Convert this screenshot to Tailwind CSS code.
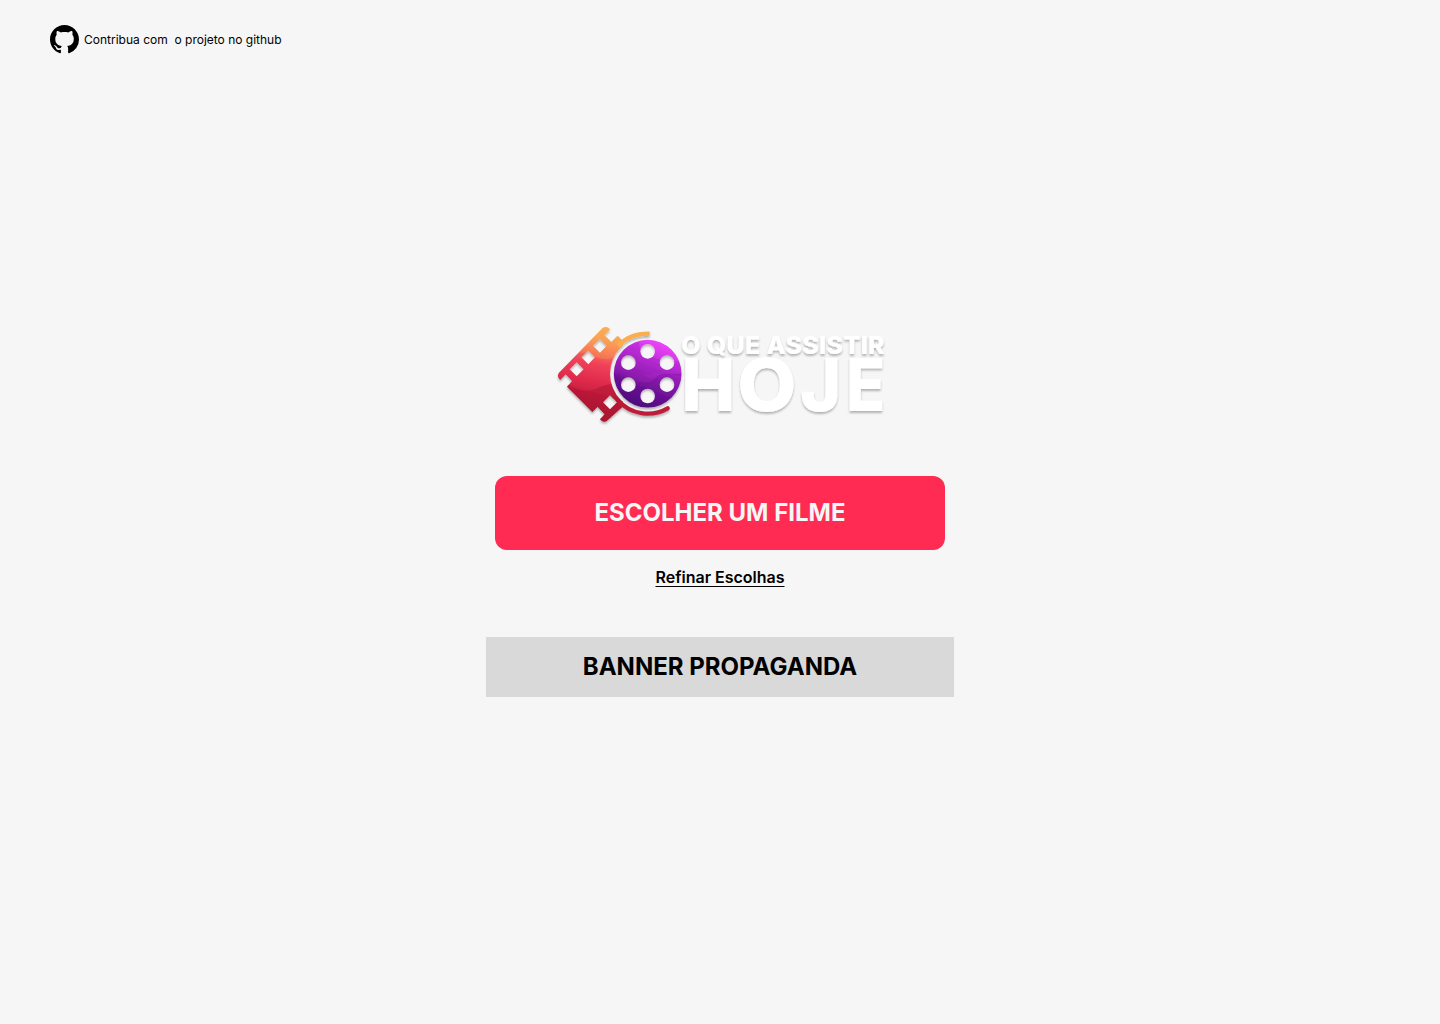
<!DOCTYPE html>
<html lang="pt-BR">
<head>
<meta charset="utf-8">
<title>O que assistir hoje</title>
<script src="https://cdn.jsdelivr.net/npm/@tailwindcss/browser@4"></script>
</head>
<body class="h-screen overflow-hidden bg-[#f6f6f6] font-['Inter',sans-serif] text-black flex flex-col">
<header class="h-[79px] pl-[50px] flex items-center shrink-0">
  <a class="flex items-center gap-[5px] text-[12px] leading-[15px]">
    <svg class="w-[29px] h-[29px]" viewBox="0 0 16 16" fill="currentColor"><path d="M8 0C3.58 0 0 3.58 0 8c0 3.54 2.29 6.53 5.47 7.59.4.07.55-.17.55-.38 0-.19-.01-.82-.01-1.49-2.01.37-2.53-.49-2.69-.94-.09-.23-.48-.94-.82-1.13-.28-.15-.68-.52-.01-.53.63-.01 1.08.58 1.23.82.72 1.21 1.87.87 2.33.66.07-.52.28-.87.51-1.07-1.78-.2-3.64-.89-3.64-3.95 0-.87.31-1.59.82-2.15-.08-.2-.36-1.02.08-2.12 0 0 .67-.21 2.2.82.64-.18 1.32-.27 2-.27s1.36.09 2 .27c1.53-1.04 2.2-.82 2.2-.82.44 1.1.16 1.92.08 2.12.51.56.82 1.27.82 2.15 0 3.07-1.87 3.75-3.65 3.95.29.25.54.73.54 1.48 0 1.07-.01 1.93-.01 2.2 0 .21.15.46.55.38A8.01 8.01 0 0 0 16 8c0-4.42-3.58-8-8-8z"/></svg>
    <span class="whitespace-pre">Contribua com  o projeto no github</span>
  </a>
</header>
<main class="flex flex-col items-center pt-[241px]">
  <svg class="w-[340px] h-[110px] overflow-visible" viewBox="0 0 1020 330" role="img" aria-label="O que assistir hoje">
    <defs>
      <linearGradient id="film" gradientUnits="userSpaceOnUse" x1="185" y1="25" x2="130" y2="290">
        <stop offset="0" stop-color="#fbb251"/><stop offset=".14" stop-color="#fba054"/><stop offset=".28" stop-color="#f67258"/><stop offset=".42" stop-color="#f04058"/><stop offset=".6" stop-color="#e22c4e"/><stop offset=".8" stop-color="#c41d3c"/><stop offset="1" stop-color="#b0142f"/>
      </linearGradient>
      <linearGradient id="arc" gradientUnits="userSpaceOnUse" x1="0" y1="210" x2="0" y2="290">
        <stop offset="0" stop-color="#b21531"/><stop offset="1" stop-color="#c0203c"/>
      </linearGradient>
      <linearGradient id="reel" gradientUnits="userSpaceOnUse" x1="345" y1="65" x2="265" y2="262">
        <stop offset="0" stop-color="#f445ff"/><stop offset=".35" stop-color="#bb2ed4"/><stop offset=".65" stop-color="#8419a6"/><stop offset="1" stop-color="#4b087c"/>
      </linearGradient>
      <filter id="shadow" x="-10%" y="-10%" width="120%" height="130%"><feDropShadow dx="0" dy="6" stdDeviation="3.5" flood-color="#000" flood-opacity=".28"/></filter>
      <filter id="textShadow" x="-10%" y="-10%" width="120%" height="130%"><feDropShadow dx="0" dy="6" stdDeviation="2.5" flood-color="#000" flood-opacity=".28"/></filter>
      <mask id="filmMask" maskUnits="userSpaceOnUse" x="0" y="0" width="420" height="330">
        <rect width="420" height="330" fill="#fff"/>
        <circle cx="293" cy="161" r="113"/>
        <path d="M150 57l20 20-20 21-21-21zM115 92l20 20-20 21-21-21zM80 127l21 21-21 21-21-21zM180 226l21 21-21 21-21-21z"/>
      </mask>
      <mask id="reelMask" maskUnits="userSpaceOnUse" x="180" y="50" width="220" height="220">
        <circle cx="293" cy="161" r="101.500" fill="#fff"/>
        <g><circle cx="293" cy="94" r="22"/><circle cx="235" cy="128" r="22"/><circle cx="351" cy="128" r="22"/><circle cx="235" cy="194" r="22"/><circle cx="351" cy="194" r="22"/><circle cx="293" cy="228" r="22"/></g>
      </mask>
      <clipPath id="filmClip"><path d="M158 24Q170 16 180 28L163 45 184 66 203 47 216 61 240 160 216 262 170 303Q159 309 150 298L164 283 143 260 127 276 51 200 66 183 47 163 31 180Q19 170 27 158Z"/></clipPath>
    </defs>
    <g filter="url(#shadow)">
      <g mask="url(#filmMask)">
        <g clip-path="url(#filmClip)">
          <rect width="300" height="330" fill="url(#film)"/>
          <path d="M88 98C125 95 140 120 170 118C195 116 200 98 225 92V0H88Z" fill="#fba653" opacity=".3"/>
          <path d="M20 182C60 192 87 218 128 210C155 203 165 184 220 196V330H20Z" fill="#a30f2d" opacity=".4"/>
        </g>
      </g>
      <path d="M205 78Q238 40 299 41" fill="none" stroke="#fbad50" stroke-width="13"/>
      <path d="M204 241A120 120 0 0 0 353 265" fill="none" stroke="url(#arc)" stroke-width="13" stroke-linecap="round"/>
    </g>
    <g filter="url(#shadow)">
      <g mask="url(#reelMask)">
        <rect x="190" y="58" width="206" height="206" fill="url(#reel)"/>
        <path d="M190 60H268C262 100 300 120 400 126V170C325 150 270 172 190 155Z" fill="#8d15b4" opacity=".25"/>
        <path d="M190 160C225 160 245 190 285 188C318 186 310 166 340 162C360 160 380 165 396 160V264H190Z" fill="#4c047f" opacity=".25"/>
      </g>
    </g>
    <g fill="#fff" class="font-['Inter',sans-serif]">
      <g font-size="219" font-weight="800" filter="url(#textShadow)">
        <text transform="translate(394 272)" x="0" y="0" textLength="162" lengthAdjust="spacingAndGlyphs">H</text>
        <text transform="translate(562 272)" x="0" y="0" textLength="178" lengthAdjust="spacingAndGlyphs">O</text>
        <text transform="translate(750 272)" x="0" y="0" textLength="124" lengthAdjust="spacingAndGlyphs">J</text>
        <text transform="translate(888 272)" x="0" y="0" textLength="118" lengthAdjust="spacingAndGlyphs">E</text>
      </g>
      <text x="394" y="103" font-size="75" font-weight="800" textLength="610" lengthAdjust="spacing" filter="url(#textShadow)">O QUE ASSISTIR</text>
    </g>
  </svg>
  <button class="mt-[46px] h-[74px] w-[450px] rounded-xl bg-[#ff2b53] pb-0.5 text-2xl font-bold leading-[29px] text-[#f6f6f6]">ESCOLHER UM FILME</button>
  <a class="mt-[18px] h-[19px] text-base font-semibold leading-[19px] underline decoration-1 underline-offset-[3px]">Refinar Escolhas</a>
  <div class="mt-[50px] flex h-[60px] w-[468px] items-center justify-center bg-[#d9d9d9] text-2xl font-bold">BANNER PROPAGANDA</div>
</main>
</body>
</html>
